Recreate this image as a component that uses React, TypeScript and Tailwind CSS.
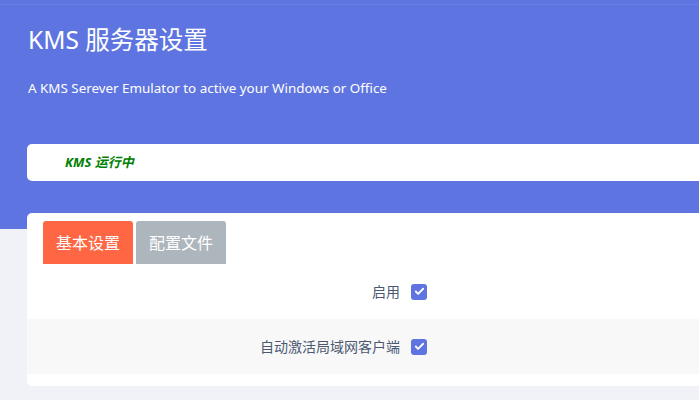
import { Check } from "lucide-react"

const font = { fontFamily: '"Noto Sans", "Noto Sans CJK SC", sans-serif' }

const Row = ({ label, shaded }: { label: string; shaded?: boolean }) => (
    <div className={`flex items-center h-[55px] ${shaded ? "bg-[#f8f8f8]" : "bg-white"}`}>
        <div className="w-[373px] text-right text-[14px] text-[#4b5872]">{label}</div>
        <div className="ml-[11px] w-4 h-4 rounded-[3px] bg-[#5e74e0] flex items-center justify-center">
            <Check size={11} strokeWidth={4} className="text-white" />
        </div>
    </div>
)

export default function App() {
    return (
        <div className="w-[699px] h-[400px] overflow-hidden bg-[#f1f2f8]" style={font}>
            <div className="bg-[#5e74e0] pt-[4px] pb-[48px]">
                <div className="h-px bg-[#6a7ee6]" />
                <div className="px-[28px] pt-[19px]">
                    <h1 className="text-[24.5px] leading-[32px] text-white">KMS 服务器设置</h1>
                    <p className="mt-[23px] text-[13.4px] leading-[18px] text-white">
                        A KMS Serever Emulator to active your Windows or Office
                    </p>
                </div>
                <div className="ml-[27px] mt-[47px] w-[700px] h-[37px] bg-white rounded-[5px] flex items-center pl-[38px]">
                    <span className="text-[13px] italic font-bold text-[#008000]">KMS 运行中</span>
                </div>
            </div>

            <div className="-mt-[16px] ml-[27px] w-[700px] bg-white rounded-[5px] pt-[8px] pb-[12px]">
                <div className="flex gap-[3px] pl-[16px]">
                    <div className="w-[90px] h-[43px] rounded-t-[3px] bg-[#ff6643] text-white text-[16px] flex items-center justify-center">基本设置</div>
                    <div className="w-[90px] h-[43px] rounded-t-[3px] bg-[#adb5bd] text-white text-[16px] flex items-center justify-center">配置文件</div>
                </div>
                <Row label="启用" />
                <Row label="自动激活局域网客户端" shaded />
            </div>
        </div>
    )
}
